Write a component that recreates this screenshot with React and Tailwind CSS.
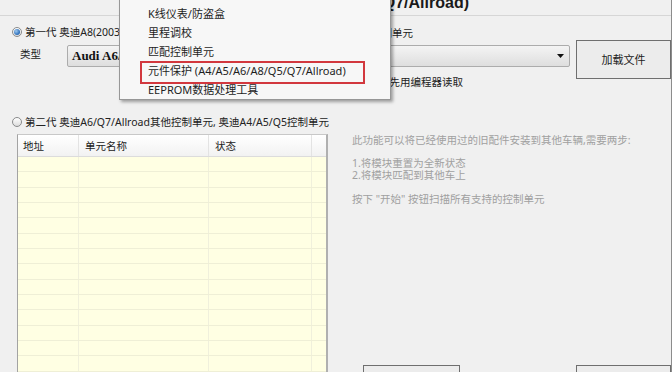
import React from "react";

const rows = Array.from({ length: 15 });

function Radio({ checked }) {
  return (
    <span className="flex h-[10px] w-[10px] shrink-0 items-center justify-center rounded-full border border-[#8a8b8c] bg-gradient-to-b from-[#ffffff] to-[#dcdcdc]">
      {checked && (
        <span className="h-[6px] w-[6px] rounded-full bg-[radial-gradient(circle_at_35%_35%,#9cc8f0,#2a6cb8_70%)]" />
      )}
    </span>
  );
}

export default function App() {
  return (
    <div className="relative h-[372px] w-[672px] overflow-hidden border-r border-[#8c8c8c] bg-[#f0f0f0] font-['Noto_Sans','Noto_Sans_CJK_SC',sans-serif] text-[10.5px] leading-[12px] text-[#222]">
      {/* title strip */}
      <div className="h-[16px] overflow-hidden border-b border-[#d6d6d6]">
        <div className="mt-[-5px] w-[469px] text-right font-['Liberation_Sans','Noto_Sans_CJK_SC',sans-serif] text-[16px] font-bold leading-[16px] text-[#1a1a1a]">
          元件保护 (A4/A5/A6/A8/Q5/Q7/Allroad)
        </div>
      </div>

      {/* top section */}
      <div className="flex h-[94px]">
        <div className="w-[360px] pl-[12px] pt-[11px]">
          <div className="flex h-[10px] items-center gap-[3px]">
            <Radio checked />
            <span className="whitespace-nowrap">第一代 奥迪A8(2003-2010)控制单元</span>
          </div>
          <div className="mt-[8px] flex items-start pl-[8px]">
            <span className="mt-[3px] w-[47px]">类型</span>
            <div className="flex h-[22px] w-[280px] items-center rounded-[2px] border border-[#acacac] bg-gradient-to-b from-[#f4f4f4] to-[#dedede] pl-[4px] font-['Liberation_Serif',serif] text-[13px] font-bold text-[#111]">
              Audi A6/A8
            </div>
          </div>
        </div>
        <div className="ml-[12px] flex">
          <div className="w-[200px] pt-[11px]">
            <div className="whitespace-nowrap pl-[1px]">控制单元</div>
            <div className="mt-[6px] flex h-[22px] items-center justify-end rounded-[2px] border border-[#acacac] bg-gradient-to-b from-[#f4f4f4] to-[#dedede] pr-[5px]">
              <svg width="7" height="4" viewBox="0 0 7 4">
                <path d="M0 0H7L3.5 4Z" fill="#111" />
              </svg>
            </div>
            <div className="ml-[-4px] mt-[9px] flex h-[12px] items-center gap-[3px]">
              <span className="h-[10px] w-[10px] border border-[#8a8a8a] bg-white" />
              <span className="whitespace-nowrap">优先用编程器读取</span>
            </div>
          </div>
          <button className="ml-[6px] mt-[24px] flex h-[39px] w-[95px] shrink-0 items-center justify-center border border-[#6f6f6f] bg-[#ececec] text-[11px] text-[#222]">
            加载文件
          </button>
        </div>
      </div>

      {/* bottom section */}
      <div className="flex">
        <div className="w-[340px] pl-[12px] pt-[7px]">
          <div className="flex h-[10px] items-center gap-[3px]">
            <Radio />
            <span className="whitespace-nowrap">第二代 奥迪A6/Q7/Allroad其他控制单元, 奥迪A4/A5/Q5控制单元</span>
          </div>
          <div className="ml-[5px] mt-[7px] w-[311px] border-l border-t border-r-2 border-[#a3a3a3] border-r-[#b0b0b0] border-t-[#c8c8c8]">
            <div className="flex h-[22px] border-b border-[#dcdcdc] bg-gradient-to-b from-[#ffffff] to-[#f2f2f2]">
              <div className="flex w-[61px] items-center border-r border-[#e3e3e3] pl-[5px]">地址</div>
              <div className="flex w-[130px] items-center border-r border-[#e3e3e3] pl-[6px]">单元名称</div>
              <div className="flex w-[103px] items-center border-r border-[#e3e3e3] pl-[6px]">状态</div>
              <div className="w-[14px]" />
            </div>
            {rows.map((_, i) => (
              <div key={i} className="flex h-[15.33px] border-b border-[#efefd6] bg-[#ffffe3]">
                <div className="w-[61px] border-r border-[#f0f0dc]" />
                <div className="w-[130px] border-r border-[#f0f0dc]" />
                <div className="w-[103px] border-r border-[#f0f0dc]" />
                <div className="w-[14px]" />
              </div>
            ))}
          </div>
        </div>
        <div className="flex-1 pt-[24px] text-[#a0a0a0]">
          <div className="pl-[14px]">
            <div className="whitespace-nowrap">此功能可以将已经使用过的旧配件安装到其他车辆,需要两步:</div>
            <div className="mt-[10.7px]">1.将模块重置为全新状态</div>
            <div>2.将模块匹配到其他车上</div>
            <div className="mt-[12px] whitespace-nowrap">按下 "开始" 按钮扫描所有支持的控制单元</div>
          </div>
          <div className="mt-[160px] flex gap-[116px] pl-[25px]">
            <button className="h-[39px] w-[97px] border border-[#6f6f6f] bg-[#ececec] text-[11px] text-[#222]">开始</button>
            <button className="h-[39px] w-[95px] shrink-0 border border-[#6f6f6f] bg-[#ececec] text-[11px] text-[#222]">关闭</button>
          </div>
        </div>
      </div>

      {/* context menu overlay */}
      <div className="absolute left-[119px] top-[-16px] w-[272px] border border-[#979797] bg-[#f7f7f7] text-[11px] shadow-[2px_2px_3px_rgba(0,0,0,0.35)]">
        {["诊断", "K线仪表/防盗盒", "里程调校", "匹配控制单元", "元件保护 (A4/A5/A6/A8/Q5/Q7/Allroad)", "EEPROM数据处理工具"].map((t) => (
          <div key={t} className="flex h-[19px] items-center whitespace-nowrap pl-[28px] text-[#1e1e1e]">
            {t}
          </div>
        ))}
        <div className="absolute left-[20px] top-[76px] h-[23px] w-[225px] border-2 border-[#d2383e]" />
      </div>
    </div>
  );
}
